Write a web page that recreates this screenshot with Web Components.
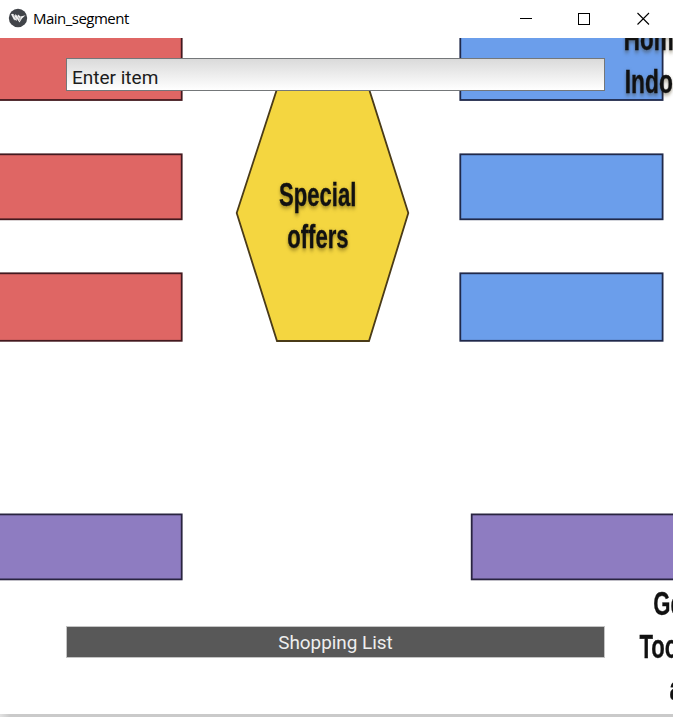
<!DOCTYPE html>
<html lang="en">
<head>
<meta charset="utf-8">
<title>Main_segment</title>
<style>
html,body{margin:0;height:100%;overflow:hidden;background:#fff}
</style>
</head>
<body>
<app-window>
  <title-bar slot="title">Main_segment</title-bar>
  <store-map slot="backdrop"></store-map>
  <item-input>Enter item</item-input>
  <list-button>Shopping List</list-button>
</app-window>
<script>
function define(name, html) {
  customElements.define(name, class extends HTMLElement {
    constructor() {
      super();
      this.attachShadow({ mode: 'open' }).innerHTML = html;
    }
  });
}

define('app-window', `
<style>
:host{display:flex;flex-direction:column;width:673px;height:717px;overflow:hidden;background:#fff}
.client{flex:1;display:grid;grid-template:100% / 100%;min-height:0}
::slotted([slot=backdrop]){grid-area:1/1;min-width:0;min-height:0}
.content{grid-area:1/1;z-index:1;display:flex;flex-direction:column;justify-content:space-between;box-sizing:border-box;padding:20px 68px 56px 66px}
.edge{height:3px;background:linear-gradient(90deg,#e2e2e2,#cacaca 10px)}
</style>
<slot name="title"></slot>
<div class="client"><slot name="backdrop"></slot><div class="content"><slot></slot></div></div>
<div class="edge"></div>`);

define('title-bar', `
<style>
:host{display:flex;align-items:center;height:38px;flex:none;background:#fff;color:#000;font:15px/20px "Open Sans","Noto Sans",sans-serif}
.logo{margin:0 5px 2px 8px}
.name{flex:1;margin-bottom:3px;letter-spacing:-.52px;white-space:nowrap}
.controls{display:flex;gap:46px;margin:0 23px 1px 0}
.controls svg:last-child{margin-left:1px}
svg{display:block;flex:none}
</style>
<svg class="logo" width="20" height="20" viewBox="0 0 20 20"><circle cx="10" cy="10" r="9.2" fill="#414449"/><path d="M3 6.2 5 5.8 7 8 7.500 6 9.500 8.200 10 6.600 12.500 8.500 17.500 7.200 14 10.500 11.500 14.400 9 11 8.500 13 6.800 11.500 6.300 12.500z" fill="#f2f2f2"/><path d="M5.500 7 8.500 11.500M9.500 8.200l2 3M12.500 8.500 11.500 13" stroke="#888" stroke-width=".6"/></svg>
<span class="name"><slot></slot></span>
<div class="controls">
<svg width="12" height="13" viewBox="0 0 12 13" shape-rendering="crispEdges"><path d="M0 6.5H12" stroke="#000"/></svg>
<svg width="12" height="13" viewBox="0 0 12 13" shape-rendering="crispEdges"><rect x=".5" y="1.5" width="11" height="11" fill="none" stroke="#000"/></svg>
<svg width="13" height="13" viewBox="0 0 13 13"><path d="M.5 1 12 12.5M12 1 .5 12.5" stroke="#000" stroke-width="1.1"/></svg>
</div>`);

define('store-map', `
<style>
:host{display:block;overflow:hidden}
svg{display:block;width:673px;height:676px}
.box{stroke-width:1.8;filter:blur(.4px)}
.red{fill:#df6664;stroke:#43191f}
.blue{fill:#6b9eeb;stroke:#20294a}
.violet{fill:#8e7cc1;stroke:#292440}
text{font:bold 33px "Liberation Sans",Arial,sans-serif;fill:#111;stroke:#111;stroke-width:.3px;filter:blur(.6px)}
.mid{text-anchor:middle}
.shade{filter:blur(.6px) drop-shadow(0 2px 2px rgba(50,35,0,.5))}
</style>
<svg viewBox="0 38 673 676">
<g class="box red"><rect x="-10" y="20" width="191.700" height="80"/><rect x="-10" y="154.300" width="191.700" height="65"/><rect x="-10" y="273.300" width="191.700" height="67.500"/></g>
<g class="box blue"><rect x="460.300" y="20" width="202.300" height="80"/><rect x="460.300" y="154.300" width="202.300" height="65"/><rect x="460.300" y="273.300" width="202.300" height="67.500"/></g>
<g class="box violet"><rect x="-10" y="514.400" width="191.700" height="65"/><rect x="471.700" y="514.400" width="220" height="65"/></g>
<path class="box" d="M277 89H369L408.300 213 369 341H277L236.700 213z" fill="#f4d640" stroke="#4a3b18"/>
<text class="mid shade" transform="translate(317.700 205.500) scale(.67 1)">Special</text>
<text class="mid shade" transform="translate(317.900 248) scale(.67 1)">offers</text>
<text class="shade" transform="translate(623.800 50) scale(.68 1)">Hom</text>
<text class="shade" transform="translate(624.800 93) scale(.69 1)">Indo</text>
<text transform="translate(653.300 614.500) scale(.67 1)">Ge</text>
<text transform="translate(639.500 657.500) scale(.67 1)">Too</text>
<text transform="translate(669.500 700) scale(.67 1)">a</text>
</svg>`);

define('item-input', `
<style>
:host{display:flex;align-items:flex-end;box-sizing:border-box;width:539px;height:33px;padding:0 5px 2px;border:1px solid #747779;background:linear-gradient(#dadada,#fff);color:#1c1c1c;font:19px/20px Roboto,sans-serif}
</style>
<span><slot></slot></span>`);

define('list-button', `
<style>
:host{display:flex;align-items:center;justify-content:center;box-sizing:border-box;width:537px;height:30px;margin:0 0 1px 1px;padding-top:2px;background:#585858;box-shadow:0 0 0 1px #c4c4c4;color:#eee;font:18.900px/20px Roboto,sans-serif}
</style>
<span><slot></slot></span>`);
</script>
</body>
</html>
